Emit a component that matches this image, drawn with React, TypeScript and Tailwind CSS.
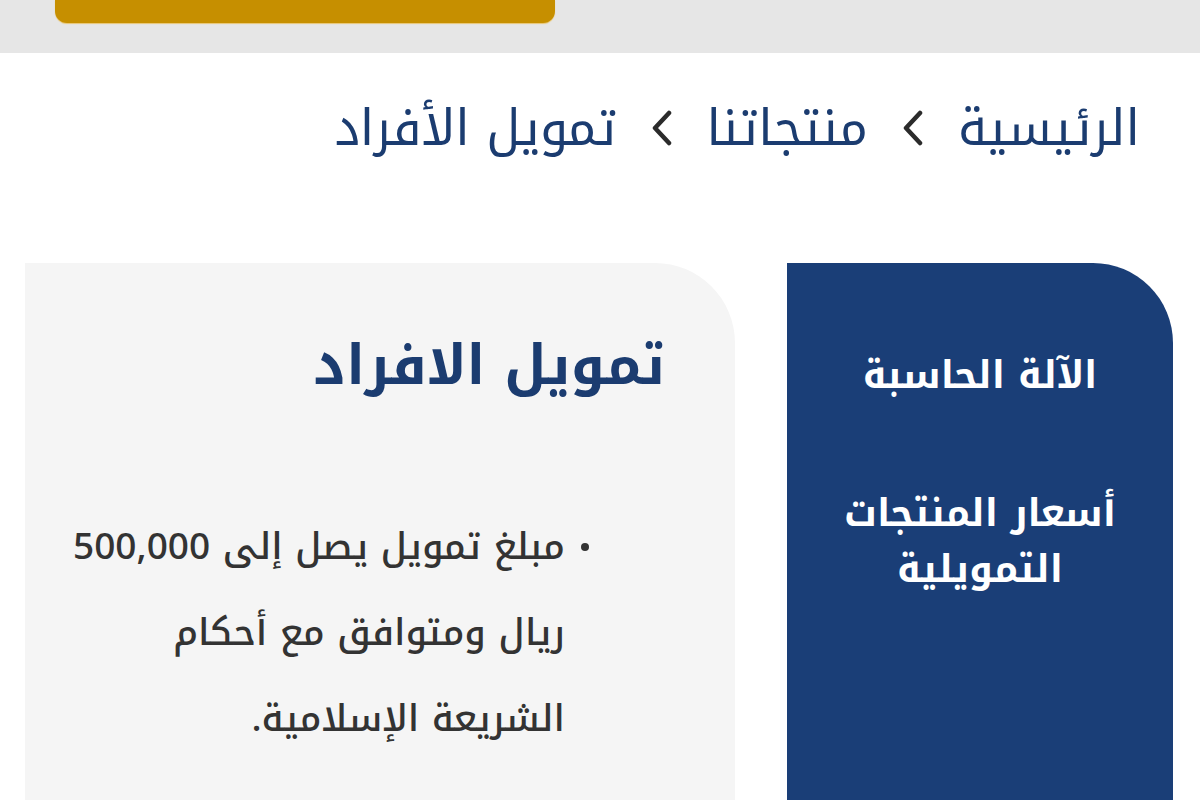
import React from 'react';

const NAVY = 'text-[#1b3c70]';

function Chevron() {
  return (
    <svg width="22" height="36" viewBox="0 0 22 36" className="mx-[34px] shrink-0">
      <path d="M18 3 L4 18 L18 33" fill="none" stroke="#2b2b2b" strokeWidth="4.5" strokeLinecap="round" strokeLinejoin="round" />
    </svg>
  );
}

const BULLET = [
  'مبلغ تمويل يصل إلى 500,000 ريال ومتوافق مع أحكام الشريعة الإسلامية.',
];

export default function App() {
  return (
    <div
      dir="rtl"
      className="h-[800px] w-[1200px] overflow-hidden bg-white font-['Noto_Kufi_Arabic',_'DejaVu_Sans',_sans-serif]"
    >
      {/* top bar */}
      <div className="flex h-[53px] items-start bg-[#e6e6e6]" dir="ltr">
        <div className="ml-[55px] h-[23px] w-[500px] rounded-b-[12px] bg-[#c68f00] shadow-[0_1px_1px_#e8c570]" />
      </div>

      {/* breadcrumb */}
      <nav className={`flex h-[156px] items-center pr-[60px] pb-[6px] text-[50px] ${NAVY}`}>
        <span>الرئيسية</span>
        <Chevron />
        <span>منتجاتنا</span>
        <Chevron />
        <span>تمويل الأفراد</span>
      </nav>

      {/* cards */}
      <div className="mt-[54px] flex gap-[52px] pr-[27px]">
        <aside className="flex h-[600px] w-[386px] shrink-0 flex-col items-center rounded-tr-[80px] bg-[#1a3e77] pt-[84px] text-center text-[38px] font-bold leading-[56px] text-white">
          <a>الآلة الحاسبة</a>
          <a className="mt-[82px] w-[300px]">أسعار المنتجات التمويلية</a>
        </aside>

        <section className="h-[600px] w-[710px] shrink-0 rounded-tr-[80px] bg-[#f5f5f5] pr-[70px] pt-[58px]">
          <h1 className={`text-[55px] font-bold leading-[90px] ${NAVY}`}>تمويل الافراد</h1>
          <ul className="mt-[93px] pr-[76px] text-[37px] font-medium leading-[86px] text-[#333333]">
            {BULLET.map((b) => (
              <li key={b} className="flex w-[520px] gap-[16px]">
                <span className="mt-[39px] size-[8px] shrink-0 rounded-full bg-[#333333]" />
                <span>{b}</span>
              </li>
            ))}
          </ul>
        </section>
      </div>
    </div>
  );
}
